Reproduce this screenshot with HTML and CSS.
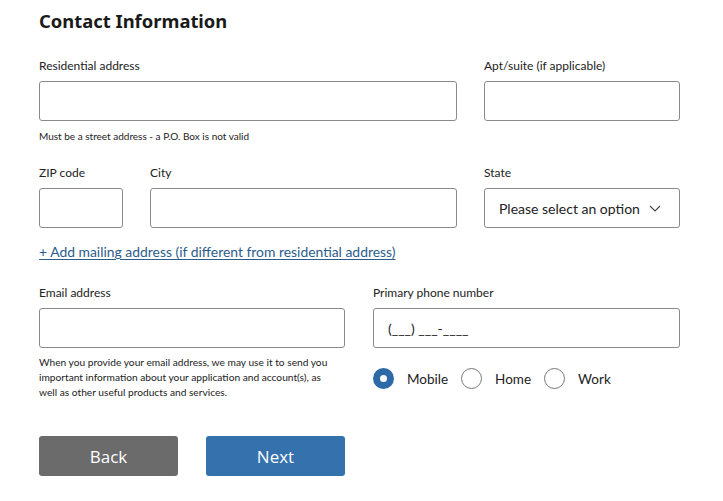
FILE: index.html
```html
<!DOCTYPE html>
<html lang="en">
<head>
  <meta charset="UTF-8" />
  <title>Contact Information</title>
  <link rel="stylesheet" href="styles.css">
</head>
<body>
  <form class="form">
    <h1 class="title">Contact Information</h1>

    <div class="row row-address">
      <div class="field f-street">
        <label class="label">Residential address</label>
        <input class="input" type="text">
        <p class="hint">Must be a street address - a P.O. Box is not valid</p>
      </div>
      <div class="field f-apt">
        <label class="label">Apt/suite (if applicable)</label>
        <input class="input" type="text">
      </div>
    </div>

    <div class="row row-city">
      <div class="field f-zip">
        <label class="label">ZIP code</label>
        <input class="input" type="text">
      </div>
      <div class="field f-city">
        <label class="label">City</label>
        <input class="input" type="text">
      </div>
      <div class="field f-state">
        <label class="label">State</label>
        <div class="select">
          <span>Please select an option</span>
          <svg class="chevron" width="12" height="7" viewBox="0 0 12 7"><path d="M1 1l5 5 5-5" fill="none" stroke="#444" stroke-width="1.1"/></svg>
        </div>
      </div>
    </div>

    <a class="add-link" href="#">+ Add mailing address (if different from residential address)</a>

    <div class="row row-contact">
      <div class="field f-half">
        <label class="label">Email address</label>
        <input class="input" type="text">
        <p class="hint hint-email">When you provide your email address, we may use it to send you important information about your application and account(s), as well as other useful products and services.</p>
      </div>
      <div class="field f-half">
        <label class="label">Primary phone number</label>
        <div class="input phone">(___) ___-____</div>
        <div class="radios">
          <label class="radio"><span class="dot checked"></span>Mobile</label>
          <label class="radio"><span class="dot"></span>Home</label>
          <label class="radio"><span class="dot"></span>Work</label>
        </div>
      </div>
    </div>

    <div class="buttons">
      <button type="button" class="btn btn-back">Back</button>
      <button type="button" class="btn btn-next">Next</button>
    </div>
  </form>
</body>
</html>
```

FILE: styles.css
```css
body {
  margin: 0;
  background: #fff;
  color: #222;
  font-family: "Lato", "Noto Sans", sans-serif;
}

.form {
  width: 641px;
  padding: 6px 0 0 39px;
}

.title {
  margin: 0;
  font-family: "Noto Sans", sans-serif;
  font-size: 18.4px;
  font-weight: 700;
  line-height: 30px;
  color: #1a1a1a;
}

.row {
  display: flex;
  gap: 27px;
}

.row-address {
  margin-top: 22px;
}

.row-city {
  margin-top: 21px;
}

.row-contact {
  margin-top: 24px;
  gap: 28px;
}

.field {
  display: flex;
  flex-direction: column;
}

.f-street { width: 418px; }
.f-apt { width: 196px; }
.f-zip { width: 84px; }
.f-city { width: 307px; }
.f-state { width: 196px; }
.f-half { width: 306px; }
.row-contact .f-half:last-child { width: 307px; }

.label {
  font-size: 12px;
  line-height: 16px;
  margin-bottom: 7px;
}

.input {
  box-sizing: border-box;
  height: 40px;
  width: 100%;
  border: 1px solid #8a8a8a;
  border-radius: 3px;
  background: #fff;
  margin: 0;
  font: inherit;
}

.hint {
  margin: 8px 0 0;
  font-size: 10px;
  line-height: 15px;
}

.hint-email {
  margin-top: 7px;
  font-size: 10.2px;
  max-width: 300px;
}

.select {
  box-sizing: border-box;
  height: 40px;
  border: 1px solid #8a8a8a;
  border-radius: 3px;
  display: flex;
  align-items: center;
  justify-content: space-between;
  padding: 0 18px 0 14px;
  font-size: 14px;
}

.add-link {
  display: inline-block;
  margin-top: 15px;
  font-size: 13.9px;
  line-height: 18px;
  color: #2b5d8c;
  text-decoration: underline;
  text-underline-offset: 2px;
}

.phone {
  display: flex;
  align-items: center;
  padding-left: 14px;
  font-size: 14px;
}

.radios {
  display: flex;
  align-items: center;
  margin-top: 20px;
}

.radio {
  display: flex;
  align-items: center;
  font-size: 13.5px;
  margin-right: 13px;
}

.dot {
  box-sizing: border-box;
  width: 21px;
  height: 21px;
  border-radius: 50%;
  border: 1px solid #777;
  margin-right: 13px;
}

.dot.checked {
  border: 7px solid #2e6aa6;
  background: #fff;
}

.buttons {
  display: flex;
  gap: 28px;
  margin-top: 36px;
}

.btn {
  width: 139px;
  height: 40px;
  border: 0;
  border-radius: 3px;
  color: #fff;
  font-family: "Open Sans", sans-serif;
  font-size: 17px;
}

.btn-back { background: #6b6b6b; }
.btn-next { background: #3471ad; }
```
